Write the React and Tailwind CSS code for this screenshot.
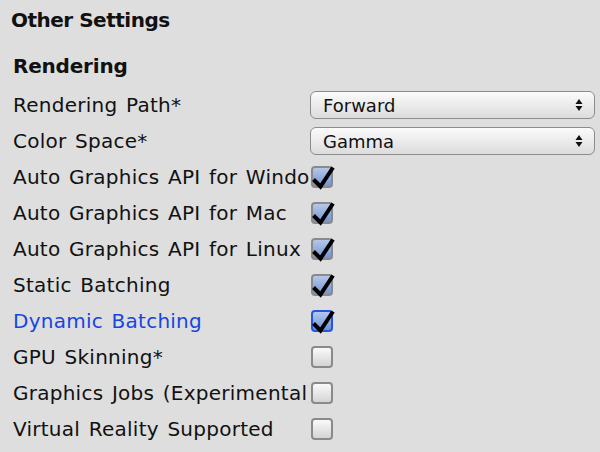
import React from 'react';

const font = { fontFamily: '"DejaVu Sans", "Liberation Sans", sans-serif' };

function Updown() {
  return (
    <svg width="8" height="14" viewBox="0 0 8 14" className="shrink-0">
      <path d="M4 1 L7.5 6 L0.5 6 Z" fill="#111" />
      <path d="M4 13 L7.5 8 L0.5 8 Z" fill="#111" />
    </svg>
  );
}

function Popup({ value }) {
  return (
    <div className="flex items-center justify-between w-[285px] h-[28px] ml-[-1px] pl-[12px] pr-[11px] rounded-[6px] border border-[#8c8c8c] bg-gradient-to-b from-[#fbfbfb] to-[#dcdcdc] text-[18px] text-[#111]">
      <span>{value}</span>
      <Updown />
    </div>
  );
}

function Check({ checked, focused }) {
  const box = focused
    ? 'border-[#2456e6] from-[#b4c8ee] to-[#6f92d6]'
    : checked
    ? 'border-[#8a8a8a] from-[#b6c8e8] to-[#7393d0]'
    : 'border-[#8a8a8a] from-[#fafafa] to-[#d4d4d4]';
  return (
    <div className={`relative w-[22px] h-[22px] rounded-[4px] border-2 bg-gradient-to-b ${box}`}>
      {checked && (
        <svg width="26" height="26" viewBox="0 0 26 26" className="absolute left-[-2px] top-[-2px] overflow-visible">
          <path d="M2.5 13.5 L9.5 20.5 L22 1.5" fill="none" stroke="#000" strokeWidth="4" strokeLinecap="butt" strokeLinejoin="miter" />
        </svg>
      )}
    </div>
  );
}

function Row({ label, blue, children }) {
  return (
    <div className="flex items-center h-[36px]">
      <div className={`w-[296px] overflow-hidden whitespace-nowrap text-[20px] tracking-[0.25px] [word-spacing:2px] ${blue ? 'text-[#1845e0]' : 'text-[#111]'}`}>{label}</div>
      <div className="ml-[2px]">{children}</div>
    </div>
  );
}

export default function App() {
  const checks = [
    ['Auto Graphics API for Windows', true],
    ['Auto Graphics API for Mac', true],
    ['Auto Graphics API for Linux', true],
    ['Static Batching', true],
    ['Dynamic Batching', true, true],
    ['GPU Skinning*', false],
    ['Graphics Jobs (Experimental)*', false],
    ['Virtual Reality Supported', false],
  ];
  return (
    <div className="w-[600px] h-[452px] overflow-hidden bg-[#dedede] pl-[13px]" style={font}>
      <div className="h-[40px] leading-[40px] ml-[-2px] text-[20px] tracking-[-0.5px] font-bold text-[#111]">Other Settings</div>
      <div className="h-[36px] leading-[36px] mt-[8px] text-[20px] tracking-[-0.2px] font-bold text-[#111]">Rendering</div>
      <div className="mt-[3px]">
        <Row label="Rendering Path*">
          <Popup value="Forward" />
        </Row>
        <Row label="Color Space*">
          <Popup value="Gamma" />
        </Row>
        {checks.map(([label, checked, focused]) => (
          <Row key={label} label={label} blue={focused}>
            <Check checked={checked} focused={focused} />
          </Row>
        ))}
      </div>
    </div>
  );
}
